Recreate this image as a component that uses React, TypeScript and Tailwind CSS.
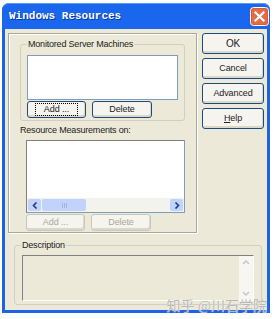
import React from 'react';

const XpButton: React.FC<{ label: React.ReactNode; disabled?: boolean; focus?: boolean; className?: string }> = ({ label, disabled, focus, className }) => (
  <div
    className={`flex items-center justify-center border rounded-[3px] text-[9px] tracking-[-0.1px] leading-none bg-[#f5f4ef] shadow-[inset_-1px_-2px_0_#dcd8c8] ${
      disabled ? 'text-[#aca899] border-[#c9c7ba]' : 'text-[#222] border-[#1c4a82]'
    } ${className ?? ''}`}
  >
    <span className={focus ? 'border border-dotted border-black px-[8px] py-[1px]' : ''}>{label}</span>
  </div>
);

const CloseIcon: React.FC = () => (
  <svg width="19" height="19" viewBox="0 0 19 19">
    <rect x="0.5" y="0.5" width="18" height="18" rx="3" fill="#dc5a34" stroke="#ffffff" />
    <rect x="2" y="2" width="15" height="15" rx="2" fill="#e46c46" />
    <path d="M5.5 5.5 L13.5 13.5 M13.5 5.5 L5.5 13.5" stroke="#ffffff" strokeWidth="2.2" strokeLinecap="square" />
  </svg>
);

const App: React.FC = () => {
  return (
    <div className="w-[276px] h-[319px] bg-white pt-[3px] pl-[2px]" style={{ fontFamily: 'Tahoma, "Liberation Sans", Arial, sans-serif' }}>
      {/* Window frame */}
      <div className="w-[268px] h-[310px] rounded-t-[7px] bg-[#1e63e6] px-[3px] pb-[3px] flex flex-col">
        {/* Title bar */}
        <div className="h-[26px] -mx-[3px] flex items-center justify-between pl-[7px] pr-[1px] bg-[#1a66ec] border-t border-[#5a9cf8] rounded-t-[7px]">
          <span className="text-white text-[11px] font-bold" style={{ fontFamily: '"Liberation Mono", "DejaVu Sans Mono", monospace', textShadow: '1px 1px 0 #0a3aa0' }}>
            Windows Resources
          </span>
          <CloseIcon />
        </div>

        {/* Body */}
        <div className="flex-1 bg-[#ece9d8] flex flex-col pl-[3px] pt-[4px]">
          <div className="flex">
            {/* Left main panel */}
            <div className="w-[189px] h-[200px] border border-[#aca899] shadow-[inset_1px_1px_0_#fff,1px_1px_0_#fff] px-[11px]">
              {/* Monitored group */}
              <div className="relative border border-[#d0d0bf] rounded-[3px] mt-[10px] h-[77px] px-[6px] pt-[10px]">
                <span className="absolute -top-[7px] left-[6px] bg-[#ece9d8] px-[1px] text-[9px] tracking-[-0.2px] leading-[13px] text-[#222]">Monitored Server Machines</span>
                <div className="h-[45px] bg-white border border-[#7f9db9]" />
                <div className="flex gap-[6px] mt-[1px]">
                  <XpButton label="Add ..." focus className="w-[59px] h-[17px]" />
                  <XpButton label="Delete" className="w-[60px] h-[17px]" />
                </div>
              </div>
              <div className="text-[9px] tracking-[-0.2px] leading-[13px] text-[#222] mt-[3px]">Resource Measurements on:</div>
              <div className="ml-[6px] mt-[3px]">
                <div className="h-[73px] bg-white border border-[#7f9db9] border-t-[#808080] border-l-[#808080] flex flex-col justify-end">
                  <div className="h-[14px] flex items-center bg-[#f3f3ee] gap-[1px] px-[1px]">
                    <div className="w-[13px] h-[12px] bg-[#c1d3fb] rounded-[2px] flex items-center justify-center">
                      <svg width="6" height="7" viewBox="0 0 6 7"><path d="M4.5 0.5 L1.5 3.5 L4.5 6.5" stroke="#1f3d8a" strokeWidth="1.6" fill="none" /></svg>
                    </div>
                    <div className="w-[44px] h-[12px] bg-[#c1d3fb] rounded-[2px] flex items-center justify-center gap-[1px]">
                      <span className="w-[1px] h-[5px] bg-[#9fb4e8]" />
                      <span className="w-[1px] h-[5px] bg-[#9fb4e8]" />
                      <span className="w-[1px] h-[5px] bg-[#9fb4e8]" />
                    </div>
                    <div className="flex-1" />
                    <div className="w-[13px] h-[12px] bg-[#c1d3fb] rounded-[2px] flex items-center justify-center">
                      <svg width="6" height="7" viewBox="0 0 6 7"><path d="M1.5 0.5 L4.5 3.5 L1.5 6.5" stroke="#1f3d8a" strokeWidth="1.6" fill="none" /></svg>
                    </div>
                  </div>
                </div>
                <div className="flex gap-[6px] mt-[1px]">
                  <XpButton label="Add ..." disabled className="w-[59px] h-[17px]" />
                  <XpButton label="Delete" disabled className="w-[60px] h-[17px]" />
                </div>
              </div>
            </div>

            {/* Right buttons */}
            <div className="flex flex-col gap-[4px] ml-[5px]">
              <XpButton label="OK" className="w-[62px] h-[21px] text-[10px]" />
              <XpButton label="Cancel" className="w-[62px] h-[21px]" />
              <XpButton label="Advanced" className="w-[62px] h-[21px]" />
              <XpButton label={<span><u>H</u>elp</span>} className="w-[62px] h-[21px]" />
            </div>
          </div>

          {/* Description */}
          <div className="relative border border-[#d0d0bf] rounded-[3px] mt-[12px] ml-[6px] mr-[5px] h-[60px] px-[7px] pt-[9px]">
            <span className="absolute -top-[7px] left-[6px] bg-[#ece9d8] px-[1px] text-[9px] tracking-[-0.2px] leading-[13px] text-[#222]">Description</span>
            <div className="h-[46px] border border-[#808080] border-r-[#fff] border-b-[#fff] flex justify-end">
              <div className="w-[14px] flex flex-col justify-between items-center py-[4px] bg-[#f7f6f1]">
                <svg width="8" height="5" viewBox="0 0 8 5"><path d="M1 4 L4 1 L7 4" stroke="#c4c4c4" strokeWidth="1.4" fill="none" /></svg>
                <svg width="8" height="5" viewBox="0 0 8 5"><path d="M1 1 L4 4 L7 1" stroke="#c4c4c4" strokeWidth="1.4" fill="none" /></svg>
              </div>
            </div>
            <span className="absolute right-[-6px] bottom-[-9px] text-[14px] leading-[16px] text-[#b8b8b8]" style={{ fontFamily: '"Noto Sans CJK SC", sans-serif', textShadow: '0 0 1px #fff' }}>
              知乎 @川石学院
            </span>
          </div>
        </div>
      </div>
    </div>
  );
};

export default App;
